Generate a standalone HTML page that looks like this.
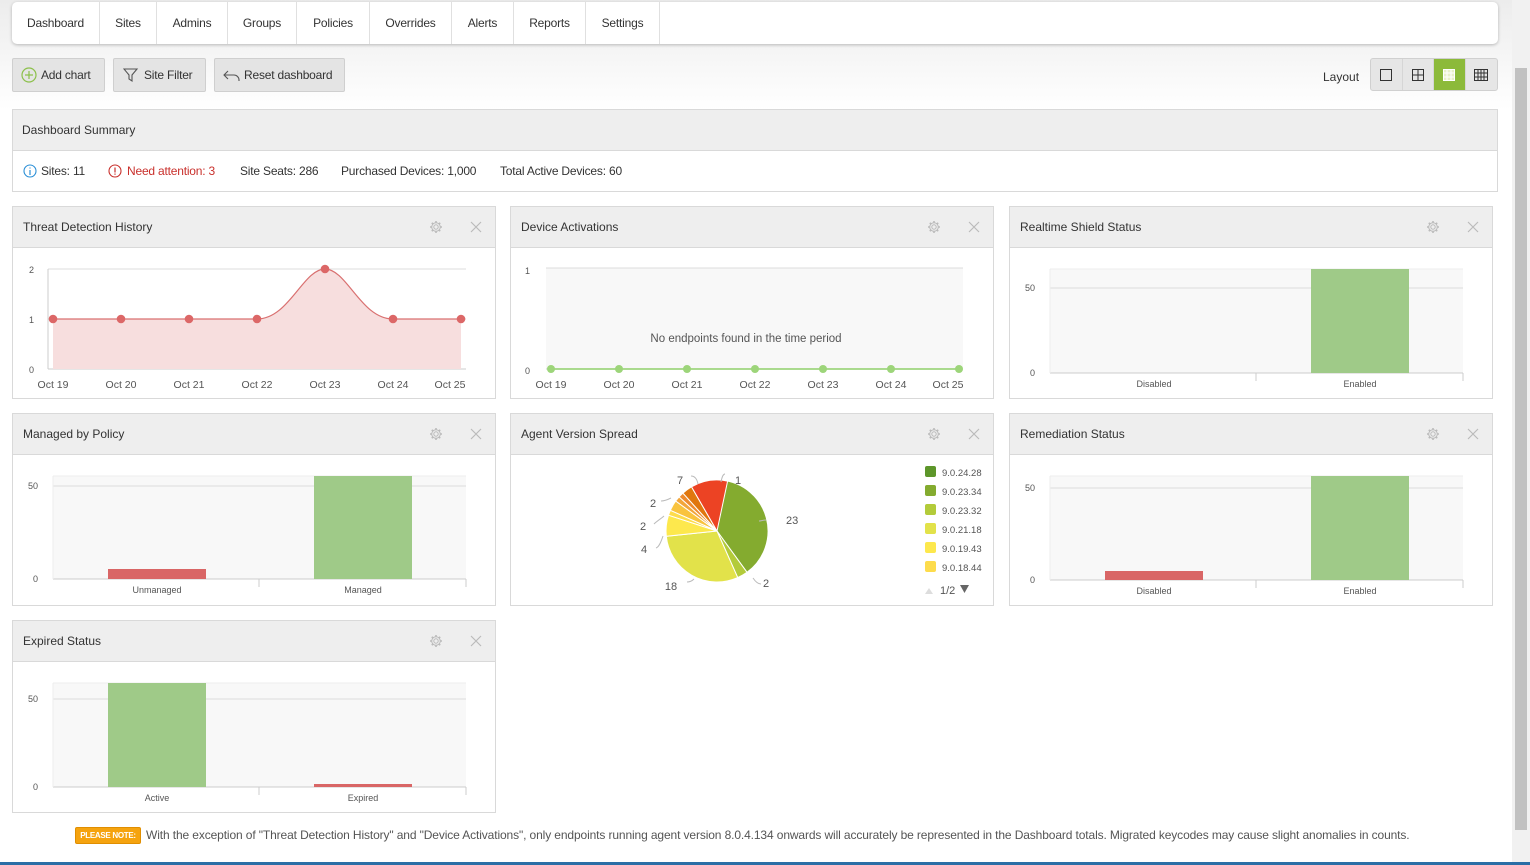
<!DOCTYPE html>
<html><head><meta charset="utf-8"><style>
*{box-sizing:border-box;margin:0;padding:0}
body{width:1530px;height:865px;overflow:hidden;position:relative;font-family:"Liberation Sans",sans-serif;color:#333;font-size:12px;background:linear-gradient(#ececec 0,#fff 110px,#fff)}
.abs{position:absolute}
.nav{left:12px;top:2px;width:1486px;height:42px;background:#fff;border-radius:5px;box-shadow:0 1px 3px rgba(0,0,0,.25);display:flex}
.nav div{text-align:center;line-height:42px;border-right:1px solid #e0e0e0;font-size:12px;color:#333;letter-spacing:-.2px}
.btn{top:58px;height:34px;background:#e4e4e4;border:1px solid #cfcfcf;border-radius:2px;line-height:32px;font-size:12px;color:#333;padding-left:28px;letter-spacing:-.2px}
.lay{top:58px;left:1370px;width:128px;height:33px;border:1px solid #d0d0d0;border-radius:3px;background:#e6e6e6;display:flex;overflow:hidden}
.lay div{width:32px;height:31px;border-right:1px solid #d6d6d6;display:flex;align-items:center;justify-content:center}
.panel{width:484px;height:193px;border:1px solid #d9d9d9;background:#fff}
.ph{height:41px;background:#eee;border-bottom:1px solid #d9d9d9;line-height:40px;padding-left:10px;font-size:12px;color:#333;position:relative}
.ph svg{position:absolute;top:13px}
.panel>svg{position:absolute;left:0;top:0}
text{font-family:"Liberation Sans",sans-serif}
</style></head><body>
<div class="abs nav"><div style="width:88px">Dashboard</div><div style="width:57px">Sites</div><div style="width:71px">Admins</div><div style="width:69px">Groups</div><div style="width:73px">Policies</div><div style="width:82px">Overrides</div><div style="width:62px">Alerts</div><div style="width:72px">Reports</div><div style="width:74px">Settings</div></div>

<div class="abs btn" style="left:12px;width:93px"><svg class="abs" style="left:8px;top:8px" width="16" height="16"><circle cx="8" cy="8" r="7" fill="none" stroke="#8cc04b" stroke-width="1.2"/><path d="M8 4v8M4 8h8" stroke="#8cc04b" stroke-width="1.2"/></svg>Add chart</div>
<div class="abs btn" style="left:113px;width:93px;padding-left:30px"><svg class="abs" style="left:9px;top:8px" width="16" height="16"><path d="M1 2h13l-5 6v6l-3-2V8z" fill="none" stroke="#555" stroke-width="1.1"/></svg>Site Filter</div>
<div class="abs btn" style="left:214px;width:131px;padding-left:29px"><svg class="abs" style="left:8px;top:9px" width="18" height="16"><path d="M5 3L1 7l4 4M1 7h10a5 5 0 0 1 5 5v1" fill="none" stroke="#555" stroke-width="1.1"/></svg>Reset dashboard</div>
<div class="abs" style="left:1323px;top:70px;font-size:12px">Layout</div>
<div class="abs lay">
<div><svg width="12" height="12"><rect x=".5" y=".5" width="11" height="11" fill="none" stroke="#333"/></svg></div>
<div><svg width="12" height="12"><rect x=".5" y=".5" width="11" height="11" fill="none" stroke="#333"/><path d="M6 0v12M0 6h12" stroke="#333"/></svg></div>
<div style="background:#8cba3a"><svg width="12" height="12"><rect x=".5" y=".5" width="11" height="11" fill="#e8f0c8" stroke="#fff"/><path d="M4 0v12M8 0v12M0 4h12M0 8h12" stroke="#fff"/></svg></div>
<div style="border:none"><svg width="14" height="12"><rect x=".5" y=".5" width="13" height="11" fill="none" stroke="#333"/><path d="M4 0v12M7 0v12M10 0v12M0 4h14M0 8h14" stroke="#333"/></svg></div>
</div>

<div class="abs" style="left:12px;top:109px;width:1486px;height:83px;border:1px solid #d9d9d9;background:#fff">
<div style="height:41px;background:#eee;border-bottom:1px solid #d9d9d9;line-height:40px;padding-left:9px;font-size:12px">Dashboard Summary</div>
<div style="position:relative;height:40px;line-height:40px;font-size:12px;letter-spacing:-.2px">
<svg class="abs" style="left:10px;top:13px" width="14" height="14"><circle cx="7" cy="7" r="6" fill="none" stroke="#2b8fd6" stroke-width="1.1"/><path d="M7 6v5M7 3.5v1" stroke="#2b8fd6" stroke-width="1.2"/></svg>
<span class="abs" style="left:28px">Sites: 11</span>
<svg class="abs" style="left:95px;top:13px" width="14" height="14"><circle cx="7" cy="7" r="6" fill="none" stroke="#c9302c" stroke-width="1.1"/><path d="M7 3.5v5M7 9.5v1.2" stroke="#c9302c" stroke-width="1.2"/></svg>
<span class="abs" style="left:114px;color:#c9302c">Need attention: 3</span>
<span class="abs" style="left:227px">Site Seats: 286</span>
<span class="abs" style="left:328px">Purchased Devices: 1,000</span>
<span class="abs" style="left:487px">Total Active Devices: 60</span>
</div></div>

<div id="panels"></div>

<div class="abs" style="left:75px;top:827px;width:66px;background:#f5a30f;border:1px solid #e08e00;color:#fff;font-size:8px;font-weight:bold;padding:3px 0;text-align:center;border-radius:2px;letter-spacing:-.3px">PLEASE NOTE:</div>
<div class="abs" style="left:146px;top:828px;font-size:12px;color:#555;letter-spacing:-.12px;white-space:nowrap">With the exception of "Threat Detection History" and "Device Activations", only endpoints running agent version 8.0.4.134 onwards will accurately be represented in the Dashboard totals. Migrated keycodes may cause slight anomalies in counts.</div>
<div class="abs" style="left:0;top:862px;width:1530px;height:3px;background:#2a6ea6"></div>
<div class="abs" style="left:1512px;top:0;width:18px;height:862px;background:#f1f1f1"></div>
<div class="abs" style="left:1515px;top:68px;width:12px;height:762px;background:#c1c1c1"></div>

<script>
const cols=[12,510,1009],rows=[206,413,620];
const gear='<svg style="right:52px" width="14" height="14" viewBox="0 0 14 14"><circle cx="7" cy="7" r="2.2" fill="none" stroke="#bbb"/><path d="M7 1v2M7 11v2M1 7h2M11 7h2M2.8 2.8l1.4 1.4M9.8 9.8l1.4 1.4M2.8 11.2l1.4-1.4M9.8 4.2l1.4-1.4" stroke="#bbb" stroke-width="1.6"/><circle cx="7" cy="7" r="4.3" fill="none" stroke="#bbb"/></svg>';
const x='<svg style="right:12px" width="14" height="14"><path d="M2 2l10 10M12 2L2 12" stroke="#bbb" stroke-width="1.2"/></svg>';
function panel(c,r,title,svg){return `<div class="abs panel" style="left:${cols[c]}px;top:${rows[r]}px"><div class="ph">${title}${gear}${x}</div><svg width="484" height="193">${svg}</svg></div>`}
function T(x,y,s,a,sz,col){return `<text x="${x}" y="${y}" font-size="${sz||10}" fill="${col||'#555'}" text-anchor="${a||'middle'}">${s}</text>`}
function bar(top50,base,bars){let s=`<rect x="40" y="62" width="413" height="${base-62}" fill="#f8f8f8"/><line x1="40" x2="453" y1="${top50}" y2="${top50}" stroke="#ddd"/><line x1="40" x2="453" y1="62" y2="62" stroke="#eee"/><line x1="40" x2="453" y1="${base}" y2="${base}" stroke="#ccc"/><line x1="40" x2="40" y1="62" y2="${base}" stroke="#eee"/><line x1="246" x2="246" y1="${base}" y2="${base+8}" stroke="#ccc"/><line x1="453" x2="453" y1="${base}" y2="${base+8}" stroke="#ccc"/>`+T(25,top50+3,'50','end',9)+T(25,base+3,'0','end',9);
bars.forEach((b,i)=>{const cx=i?350:144;s+=`<rect x="${cx-49}" y="${b[1]}" width="98" height="${base-b[1]}" fill="${b[2]}"/>`+T(cx,base+14,b[0],'middle',9)});return s}
const days=['Oct 19','Oct 20','Oct 21','Oct 22','Oct 23','Oct 24','Oct 25'];
let th=`<line x1="35" x2="453" y1="62" y2="62" stroke="#ddd"/><line x1="35" x2="453" y1="112" y2="112" stroke="#ddd"/><line x1="35" x2="35" y1="62" y2="162" stroke="#ccc"/><line x1="35" x2="453" y1="162" y2="162" stroke="#ccc"/>`;
th+=`<path d="M40 112H244C276 112 290 62 312 62S348 112 380 112H448V162H40Z" fill="#f7dede"/><path d="M40 112H244C276 112 290 62 312 62S348 112 380 112H448" fill="none" stroke="#d97070" stroke-width="1.2"/>`;
[112,112,112,112,62,112,112].forEach((y,i)=>{th+=`<circle cx="${40+68*i}" cy="${y}" r="4.3" fill="#dc6767"/>`+T(i==6?437:40+68*i,181,days[i],'middle',10.5)});
th+=T(21,66,'2','end',9)+T(21,116,'1','end',9)+T(21,166,'0','end',9);
let da=`<rect x="35" y="61" width="417" height="101" fill="#f8f8f8"/><line x1="35" x2="452" y1="61" y2="61" stroke="#ddd"/><line x1="35" x2="452" y1="162" y2="162" stroke="#ccc"/>`+T(19,67,'1','end',9)+T(19,167,'0','end',9)+T(235,135,'No endpoints found in the time period','middle',11.5,'#555')+`<line x1="40" x2="448" y1="162" y2="162" stroke="#8fcf6a" stroke-width="1.5"/>`;
days.forEach((d,i)=>{da+=`<circle cx="${40+68*i}" cy="162" r="4" fill="#9dd57a"/>`+T(i==6?437:40+68*i,181,d,'middle',10.5)});
const sl=[[1,'#5d962a'],[23,'#84ab2f'],[2,'#b3cb3a'],[18,'#e2e24a'],[4,'#fde84d'],[1,'#fddc4c'],[2,'#f9c33e'],[1,'#f2a63a'],[1,'#ee8c2f'],[2,'#e0770e'],[7,'#ec4324']];
const cx=206,cy=117,R=51;let a0=-Math.PI/2,pie='';
sl.forEach(s=>{const a1=a0+s[0]/60*2*Math.PI;const p=(a)=>`${(cx+R*Math.cos(a)).toFixed(1)} ${(cy+R*Math.sin(a)).toFixed(1)}`;pie+=`<path d="M${cx} ${cy}L${p(a0)}A${R} ${R} 0 ${a1-a0>Math.PI?1:0} 1 ${p(a1)}Z" fill="${s[1]}" stroke="#fff" stroke-width="1"/>`;a0=a1});
pie+=T(224,70,'1','start',11)+T(169,70,'7','middle',11)+T(142,93,'2','middle',11)+T(132,116,'2','middle',11)+T(133,139,'4','middle',11)+T(160,176,'18','middle',11)+T(275,110,'23','start',11)+T(252,173,'2','start',11);
pie+=`<path d="M214 60c-2 0-3 3-4 8M180 62c4 0 6 3 7 8M150 87c4 0 8-2 10-3M143 110c3-3 8-6 10-8M145 134c3-1 5-6 7-12M255 106c-3 0-5 1-7 1M250 170c-3 0-6-3-8-6M176 168c2 0 5-1 7-3" fill="none" stroke="#bbb"/>`;
['9.0.24.28','9.0.23.34','9.0.23.32','9.0.21.18','9.0.19.43','9.0.18.44'].forEach((v,i)=>{pie+=`<rect x="414" y="${52+19*i}" width="11" height="11" rx="2" fill="${sl[i][1]}"/>`+T(431,62+19*i,v,'start',9.5)});
pie+=`<path d="M414 180l4-6 4 6z" fill="#ddd"/>`+T(429,180,'1/2','start',11)+`<path d="M449 171h9l-4.5 8z" fill="#666"/>`;
let h='';
h+=panel(0,0,'Threat Detection History',th);
h+=panel(1,0,'Device Activations',da);
h+=panel(2,0,'Realtime Shield Status',bar(81,166,[['Disabled',166,'#d96666'],['Enabled',62,'#9fca88']]));
h+=panel(0,1,'Managed by Policy',bar(72,165,[['Unmanaged',155,'#d96666'],['Managed',62,'#9fca88']]));
h+=panel(1,1,'Agent Version Spread',pie);
h+=panel(2,1,'Remediation Status',bar(74,166,[['Disabled',157,'#d96666'],['Enabled',62,'#9fca88']]));
h+=panel(0,2,'Expired Status',bar(78,166,[['Active',62,'#9fca88'],['Expired',163,'#d96666']]));
document.getElementById('panels').innerHTML=h;
</script>
</body></html>
